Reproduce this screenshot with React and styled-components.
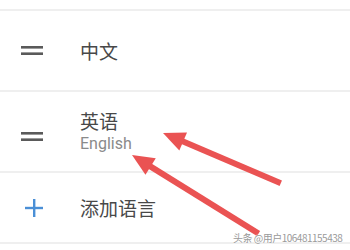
import React from 'react'
import styled, { createGlobalStyle } from 'styled-components'

const GlobalStyle = createGlobalStyle`
	html, body {
		margin: 0;
		padding: 0;
		background: #ffffff;
	}
	body {
		font-family: 'Noto Sans CJK SC', Roboto, 'Noto Sans', sans-serif;
	}
`

// each entry in the language list
const languages = [
	{ name: '中文' },
	{ name: '英语', sub: 'English' },
]

function DragHandle() {
	return (
		<svg width="22" height="10" viewBox="0 0 22 10">
			<rect x="0" y="0" width="22" height="2.6" fill="#5a5a5a" />
			<rect x="0" y="6.4" width="22" height="2.6" fill="#5a5a5a" />
		</svg>
	)
}

function PlusIcon() {
	return (
		<svg width="18" height="18" viewBox="0 0 18 18">
			<rect x="8" y="0" width="2.4" height="18" fill="#4a8fd6" />
			<rect x="0" y="7.8" width="18" height="2.4" fill="#4a8fd6" />
		</svg>
	)
}

// red annotation arrows drawn over the list
function Arrows() {
	const arrow = (x1, y1, x2, y2) => {
		const ang = Math.atan2(y2 - y1, x2 - x1)
		const len = 24
		const spread = 0.42
		const ax = x2 - len * Math.cos(ang - spread)
		const ay = y2 - len * Math.sin(ang - spread)
		const bx = x2 - len * Math.cos(ang + spread)
		const by = y2 - len * Math.sin(ang + spread)
		const sx = x2 - 16 * Math.cos(ang)
		const sy = y2 - 16 * Math.sin(ang)
		return (
			<g>
				<line x1={x1} y1={y1} x2={sx} y2={sy} stroke="#ea5353" strokeWidth="6" strokeLinecap="square" />
				<polygon points={`${x2},${y2} ${ax},${ay} ${bx},${by}`} fill="#ea5353" />
			</g>
		)
	}
	return (
		<Overlay width="350" height="250" viewBox="0 0 350 250">
			{arrow(278, 182, 163, 133)}
			{arrow(256, 232, 132, 155)}
		</Overlay>
	)
}

export default function App() {
	return (
		<Page>
			<GlobalStyle />
			<List>
				{languages.map((lang) => (
					<Row key={lang.name}>
						<IconCell offset={lang.sub ? 11 : 0}>
							<DragHandle />
						</IconCell>
						<Labels>
							<Name>{lang.name}</Name>
							{lang.sub && <Sub>{lang.sub}</Sub>}
						</Labels>
					</Row>
				))}
				<Row short>
					<IconCell indent={25}>
						<PlusIcon />
					</IconCell>
					<Labels>
						<Name>添加语言</Name>
					</Labels>
				</Row>
			</List>
			<Arrows />
			<Watermark>头条 @用户106481155438</Watermark>
		</Page>
	)
}

const Page = styled.div`
	position: relative;
	width: 350px;
	height: 250px;
	overflow: hidden;
	padding-top: 9px;
	box-sizing: border-box;
`

const List = styled.div`
	display: flex;
	flex-direction: column;
	border-top: 2px solid #efefef;
`

const Row = styled.div`
	display: flex;
	align-items: center;
	height: ${(p) => (p.short ? 69 : 79)}px;
	border-bottom: 2px solid #efefef;
`

const IconCell = styled.div`
	width: 80px;
	padding-left: ${(p) => p.indent || 21}px;
	box-sizing: border-box;
	display: flex;
	align-items: center;
	margin-top: ${(p) => p.offset || 0}px;
`

const Labels = styled.div`
	display: flex;
	flex-direction: column;
`

const Name = styled.div`
	font-size: 19px;
	line-height: 24px;
	color: #484848;
`

const Sub = styled.div`
	font-family: Roboto, 'Noto Sans', sans-serif;
	font-size: 16px;
	line-height: 20px;
	color: #8a8a8a;
	margin-top: 1px;
`

const Overlay = styled.svg`
	position: absolute;
	left: 0;
	top: 0;
	pointer-events: none;
`

const Watermark = styled.div`
	position: absolute;
	left: 233px;
	top: 231px;
	white-space: nowrap;
	font-size: 10px;
	line-height: 14px;
	color: #9a9a9a;
	letter-spacing: -0.5px;
	text-shadow: 0 0 1px #fff, 0 0 2px #fff;
`
